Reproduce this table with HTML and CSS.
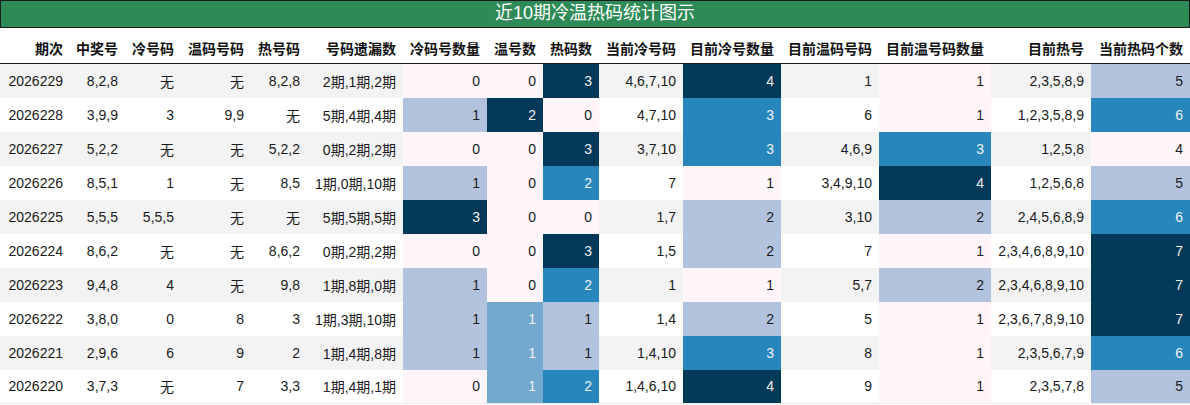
FILE: index.html
```html
<!DOCTYPE html>
<html lang="zh">
<head>
<meta charset="utf-8">
<title>近10期冷温热码统计图示</title>
<link rel="stylesheet" href="styles.css">
</head>
<body>
<div class="title">近10期冷温热码统计图示</div>
<table class="stats">
<colgroup>
<col class="w70"><col class="w55"><col class="w56"><col class="w70"><col class="w56"><col class="w96"><col class="w84"><col class="w56"><col class="w56"><col class="w84"><col class="w98"><col class="w98"><col class="w112"><col class="w100"><col class="w99">
</colgroup>
<thead>
<tr><th>期次</th><th>中奖号</th><th>冷号码</th><th>温码号码</th><th>热号码</th><th>号码遗漏数</th><th>冷码号数量</th><th>温号数</th><th>热码数</th><th>当前冷号码</th><th>目前冷号数量</th><th>目前温码号码</th><th>目前温号码数量</th><th>目前热号</th><th>当前热码个数</th></tr>
</thead>
<tbody>
<tr><td>2026229</td><td>8,2,8</td><td>无</td><td>无</td><td>8,2,8</td><td>2期,1期,2期</td><td class="h0">0</td><td class="h0">0</td><td class="h3">3</td><td>4,6,7,10</td><td class="h3">4</td><td>1</td><td class="h0">1</td><td>2,3,5,8,9</td><td class="h1">5</td></tr>
<tr><td>2026228</td><td>3,9,9</td><td>3</td><td>9,9</td><td>无</td><td>5期,4期,4期</td><td class="h1">1</td><td class="h3">2</td><td class="h0">0</td><td>4,7,10</td><td class="h2">3</td><td>6</td><td class="h0">1</td><td>1,2,3,5,8,9</td><td class="h2">6</td></tr>
<tr><td>2026227</td><td>5,2,2</td><td>无</td><td>无</td><td>5,2,2</td><td>0期,2期,2期</td><td class="h0">0</td><td class="h0">0</td><td class="h3">3</td><td>3,7,10</td><td class="h2">3</td><td>4,6,9</td><td class="h2">3</td><td>1,2,5,8</td><td class="h0">4</td></tr>
<tr><td>2026226</td><td>8,5,1</td><td>1</td><td>无</td><td>8,5</td><td>1期,0期,10期</td><td class="h1">1</td><td class="h0">0</td><td class="h2">2</td><td>7</td><td class="h0">1</td><td>3,4,9,10</td><td class="h3">4</td><td>1,2,5,6,8</td><td class="h1">5</td></tr>
<tr><td>2026225</td><td>5,5,5</td><td>5,5,5</td><td>无</td><td>无</td><td>5期,5期,5期</td><td class="h3">3</td><td class="h0">0</td><td class="h0">0</td><td>1,7</td><td class="h1">2</td><td>3,10</td><td class="h1">2</td><td>2,4,5,6,8,9</td><td class="h2">6</td></tr>
<tr><td>2026224</td><td>8,6,2</td><td>无</td><td>无</td><td>8,6,2</td><td>0期,2期,2期</td><td class="h0">0</td><td class="h0">0</td><td class="h3">3</td><td>1,5</td><td class="h1">2</td><td>7</td><td class="h0">1</td><td>2,3,4,6,8,9,10</td><td class="h3">7</td></tr>
<tr><td>2026223</td><td>9,4,8</td><td>4</td><td>无</td><td>9,8</td><td>1期,8期,0期</td><td class="h1">1</td><td class="h0">0</td><td class="h2">2</td><td>1</td><td class="h0">1</td><td>5,7</td><td class="h1">2</td><td>2,3,4,6,8,9,10</td><td class="h3">7</td></tr>
<tr><td>2026222</td><td>3,8,0</td><td>0</td><td>8</td><td>3</td><td>1期,3期,10期</td><td class="h1">1</td><td class="hm">1</td><td class="h1">1</td><td>1,4</td><td class="h1">2</td><td>5</td><td class="h0">1</td><td>2,3,6,7,8,9,10</td><td class="h3">7</td></tr>
<tr><td>2026221</td><td>2,9,6</td><td>6</td><td>9</td><td>2</td><td>1期,4期,8期</td><td class="h1">1</td><td class="hm">1</td><td class="h1">1</td><td>1,4,10</td><td class="h2">3</td><td>8</td><td class="h0">1</td><td>2,3,5,6,7,9</td><td class="h2">6</td></tr>
<tr><td>2026220</td><td>3,7,3</td><td>无</td><td>7</td><td>3,3</td><td>1期,4期,1期</td><td class="h0">0</td><td class="hm">1</td><td class="h2">2</td><td>1,4,6,10</td><td class="h3">4</td><td>9</td><td class="h0">1</td><td>2,3,5,7,8</td><td class="h1">5</td></tr>
</tbody>
</table>
</body>
</html>
```
FILE: styles.css
```css
html, body {
  margin: 0;
  padding: 0;
  background: #ffffff;
}
body {
  width: 1190px;
  font-family: "Liberation Sans", "Noto Sans CJK SC", sans-serif;
  color: #1a1a1a;
}
.title {
  box-sizing: border-box;
  height: 28px;
  border: 1px solid #1c1c1c;
  background: #2e8b57;
  color: #ffffff;
  font-size: 18px;
  line-height: 25px;
  text-align: center;
}
.stats {
  width: 1190px;
  table-layout: fixed;
  border-collapse: collapse;
  border-spacing: 0;
  font-size: 14px;
  border-bottom: 1px solid #ebebeb;
}
.w55 { width: 55px; }
.w56 { width: 56px; }
.w70 { width: 70px; }
.w84 { width: 84px; }
.w96 { width: 96px; }
.w98 { width: 98px; }
.w99 { width: 99px; }
.w100 { width: 100px; }
.w112 { width: 112px; }
.stats th {
  height: 31px;
  padding: 4px 7px 0 0;
  text-align: right;
  font-weight: bold;
  color: #111111;
  white-space: nowrap;
  border-bottom: 1px solid #1a1a1a;
  vertical-align: middle;
}
.stats td {
  height: 34px;
  padding: 0 7px 0 0;
  text-align: right;
  white-space: nowrap;
  vertical-align: middle;
  box-sizing: border-box;
}
.stats tbody tr:nth-child(odd) td {
  background: #f3f3f3;
}
.stats tbody tr td.h0 { background: #fff5fa; color: #1a1a1a; }
.stats tbody tr td.h1 { background: #b3c3de; color: #1a1a1a; }
.stats tbody tr td.hm { background: #73a8cf; color: #f2f2f2; }
.stats tbody tr td.h2 { background: #2786bb; color: #f2f2f2; }
.stats tbody tr td.h3 { background: #023858; color: #f2f2f2; }
```
